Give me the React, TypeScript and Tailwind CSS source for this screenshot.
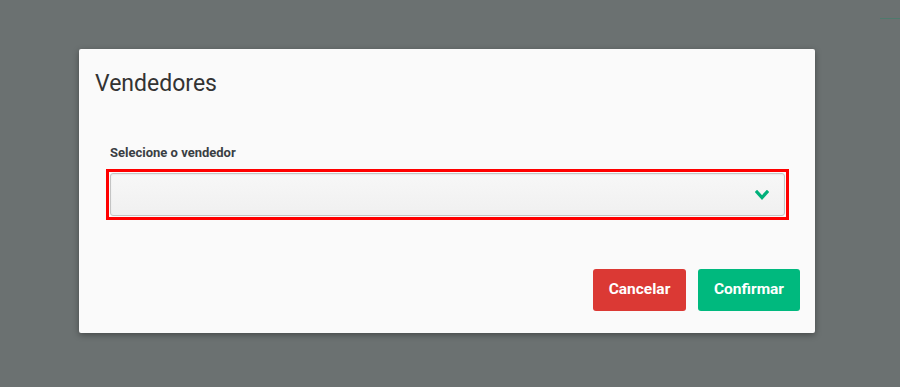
import React from "react";

const App = () => {
  return (
    <div
      className="relative h-[387px] w-[900px] overflow-hidden bg-[#6b7171] pl-[79px] pt-[49px]"
      style={{ fontFamily: "Roboto, 'Liberation Sans', sans-serif" }}
    >
      {/* leftover line behind the backdrop */}
      <div className="absolute right-0 top-[18px] h-px w-[20px] bg-[#4e7a6d]" />

      <div className="flex h-[284px] w-[736px] flex-col rounded-[2px] bg-[#fafafa] shadow-[0_2px_6px_rgba(0,0,0,0.35)]">
        <h2 className="pl-4 pt-5 text-[23px] leading-[30px] text-[#333]">Vendedores</h2>

        <div className="ml-[15px] mr-[17px] mt-[28px] flex h-[110px] flex-col pl-3 pr-[9px] pt-[18px]">
          <label className="pl-1 text-[13px] font-bold leading-4 text-[#3a3f44]">
            Selecione o vendedor
          </label>
          <div className="mt-2 border-[3px] border-[#ff0000] p-px">
            <div className="flex h-[43px] items-center justify-end rounded-[3px] border border-[#c4c4c4] bg-gradient-to-b from-[#f7f7f7] to-[#f0f0f0] pr-[15px] shadow-[inset_0_1px_2px_rgba(0,0,0,0.06)]">
              <svg width="14" height="10" viewBox="0 0 14 10">
                <polyline
                  points="2,2 7,7.5 12,2"
                  fill="none"
                  stroke="#00b07a"
                  strokeWidth="3.2"
                  strokeLinecap="square"
                />
              </svg>
            </div>
          </div>
        </div>

        <div className="mt-8 flex justify-end gap-3 pr-[15px]">
          <button className="h-[42px] w-[93px] rounded-[3px] bg-[#db3934] text-[15.5px] font-bold text-white">
            Cancelar
          </button>
          <button className="h-[42px] w-[102px] rounded-[3px] bg-[#00b97e] text-[15.5px] font-bold text-white">
            Confirmar
          </button>
        </div>
      </div>
    </div>
  );
};

export default App;
